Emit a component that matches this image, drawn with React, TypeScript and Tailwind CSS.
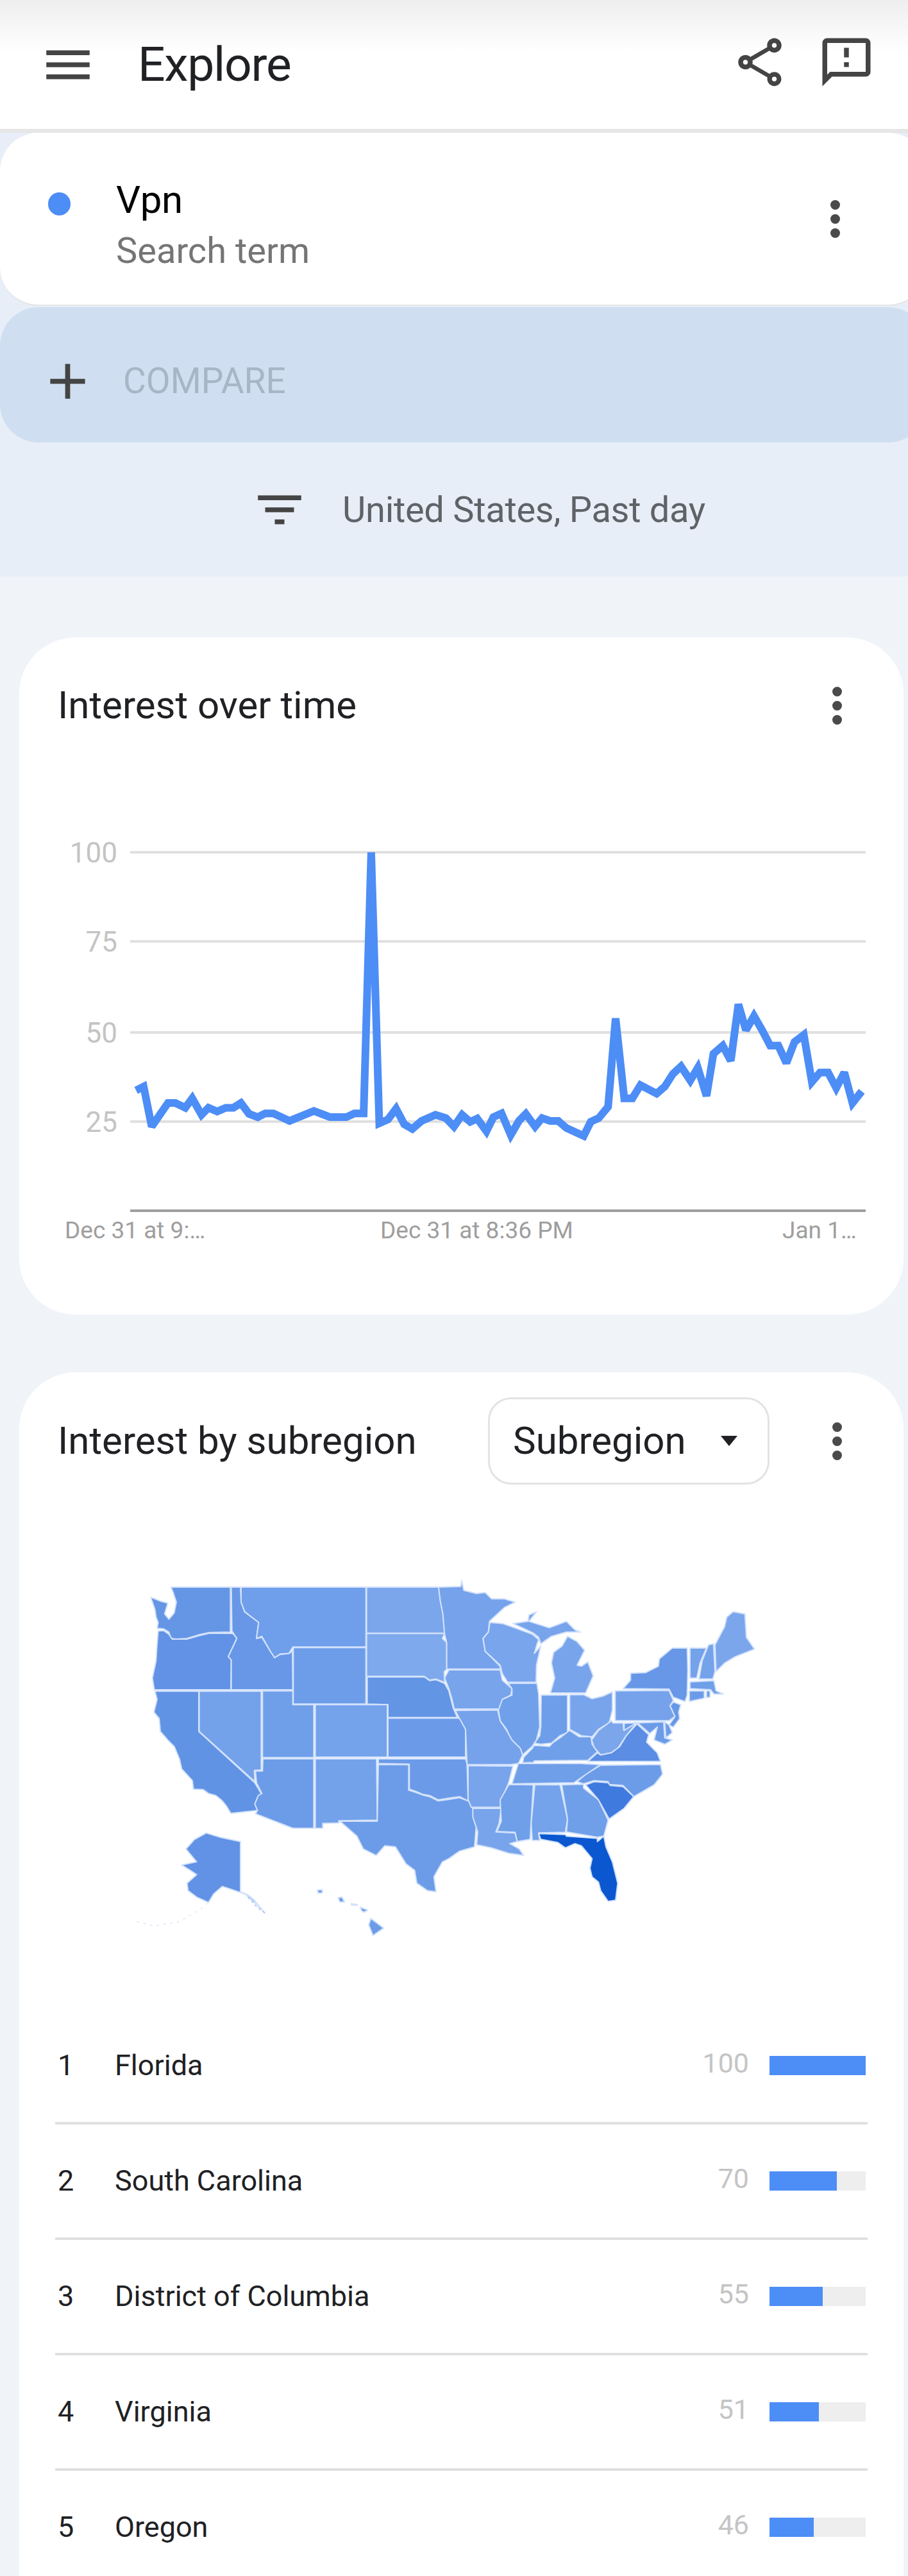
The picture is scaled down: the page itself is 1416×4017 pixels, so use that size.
const font = "Roboto";

const westStates: [string, string][] = [
  ["#6596e5", "200,75 478,75 478,285 380,287 330,298 275,315 225,318 200,315 190,285 165,270 135,268 140,240 130,215 125,180 105,122 150,140 185,150 170,200 190,225 215,195 225,145 210,100"],
  ["#6192e5", "140,280 165,278 190,295 205,318 275,318 330,302 380,290 490,292 508,315 468,400 482,415 480,555 122,555 113,500 130,420 135,340"],
  ["#6797e6", "482,75 525,75 528,145 545,190 610,240 600,315 625,310 665,375 685,405 710,390 755,385 768,370 770,555 482,555 482,415 468,400 508,315 485,280"],
  ["#6f9eea", "528,75 1112,75 1112,355 770,355 752,385 710,388 685,405 665,375 625,305 600,315 610,240 545,190 528,145"],
  ["#6d9de9", "772,358 1112,358 1112,622 772,622"],
  ["#7ba6ec", "1115,75 1452,75 1460,140 1472,200 1480,290 1115,290"],
  ["#7fa9ed", "1115,292 1480,292 1470,315 1490,335 1490,460 1478,470 1480,520 1440,505 1410,510 1385,492 1115,492"],
  ["#6395e5", "1118,495 1385,495 1410,512 1440,508 1480,525 1500,560 1520,640 1540,685 1215,685 1215,625 1118,622"],
  ["#6b9be8", "1215,688 1550,688 1570,710 1578,740 1578,870 1215,870"],
  ["#74a2eb", "875,625 1212,625 1212,870 875,870"],
  ["#6f9fe9", "628,560 770,560 770,625 868,625 868,872 628,872"],
  ["#73a1ea", "332,562 622,562 622,930 590,932 592,985 332,750"],
  ["#6193e5", "125,562 330,562 330,750 592,990 622,1040 600,1070 605,1120 480,1133 460,1100 440,1075 410,1050 375,1040 350,1022 305,1020 300,980 250,925 240,880 215,820 185,790 150,750 145,690 120,660 135,600"],
  ["#6c9ce8", "630,878 868,878 868,1203 770,1203 595,1135 605,1120 592,1090 608,1050 625,1040 600,990 595,935 628,935"],
  ["#73a1ea", "875,878 1162,878 1165,1165 985,1168 985,1178 910,1180 910,1203 875,1203"],
  ["#6b9be8", "1170,878 1578,878 1585,900 1590,1075 1550,1055 1500,1062 1450,1070 1410,1050 1380,1045 1345,1030 1315,1020 1315,903 1170,900"],
  ["#6c9ce8", "1170,905 1312,905 1312,1025 1345,1035 1380,1048 1410,1055 1450,1075 1500,1068 1550,1060 1603,1080 1630,1170 1620,1290 1550,1310 1500,1345 1470,1360 1430,1430 1440,1500 1400,1495 1350,1460 1340,1400 1300,1370 1250,1290 1200,1285 1160,1330 1100,1300 1070,1240 990,1170 1165,1170"],
  ["#6192e5", "365,1225 430,1245 525,1265 525,1500 560,1515 590,1540 640,1600 590,1550 545,1510 470,1485 440,1475 400,1510 375,1550 320,1525 280,1495 275,1460 320,1420 290,1400 250,1375 320,1360 270,1300 310,1255"],
  ["#6c9ce8", "1135,1625 1195,1670 1145,1705 1125,1655"],
  ["#6c9ce8", "885,1492 908,1490 908,1505 888,1507"],
  ["#6c9ce8", "982,1528 1000,1525 1012,1548 990,1548"],
  ["#6c9ce8", "1042,1556 1072,1560 1070,1564 1045,1562"],
  ["#6c9ce8", "1085,1572 1120,1585 1105,1596 1092,1590"],
];

const eastStates: [string, string][] = [
  ["#76a2eb", "-48,75 55,72 60,45 70,90 130,105 170,100 200,130 260,130 310,145 260,170 190,235 185,285 160,315 170,375 240,445 240,458 -10,458 -10,335 -20,295 -28,200 -40,140"],
  ["#79a5ec", "192,240 250,245 300,262 390,295 420,320 410,350 400,385 430,350 410,440 408,520 275,520 250,480 240,440 170,375 160,315 185,285"],
  ["#78a4ec", "300,245 370,235 375,205 410,190 375,235 470,265 550,235 590,275 615,285 550,285 480,305 430,340 420,310 395,290"],
  ["#78a4ec", "555,305 600,330 635,370 600,440 620,445 650,425 675,490 640,570 475,570 495,500 480,430 490,380 530,350"],
  ["#78a4ec", "0,462 240,462 250,510 295,550 290,580 250,600 240,645 25,645 15,600 0,550 -20,500"],
  ["#70a0ea", "278,525 412,525 420,575 425,730 410,790 390,820 345,860 330,825 290,785 270,740 240,700 232,650 250,600 295,580 295,550"],
  ["#6e9ee9", "432,580 555,580 555,755 520,770 480,805 430,810 400,805 425,770 430,730"],
  ["#78a4ec", "565,578 630,578 670,597 720,585 765,565 765,650 750,710 700,740 670,775 620,770 565,740"],
  ["#75a2eb", "30,652 228,650 240,700 270,745 295,790 335,830 345,860 325,900 290,905 85,905 78,740 50,690"],
  ["#6f9fe9", "400,815 470,820 490,800 520,780 565,745 610,775 665,775 670,810 695,845 650,885 400,888 395,895 345,897 350,870 390,830"],
  ["#7ba6ec", "768,710 815,710 818,745 860,710 880,708 830,770 790,830 760,850 710,860 680,825 668,790 700,745 760,700"],
  ["#75a2eb", "778,560 1030,558 1050,605 1035,630 1058,680 1030,700 778,700"],
  ["#6797e6", "815,550 850,510 850,478 920,475 980,445 985,410 1045,360 1115,360 1118,460 1115,580 1105,610 1050,590 1030,552"],
  ["#74a2eb", "1128,360 1205,360 1175,430 1160,500 1128,500"],
  ["#74a2eb", "1215,345 1238,340 1245,470 1235,505 1170,505 1185,420"],
  ["#7ba6ec", "1245,345 1290,260 1300,215 1330,190 1385,200 1392,310 1430,365 1340,400 1290,430 1250,470"],
  ["#6f9fe9", "1128,518 1240,512 1250,560 1285,575 1240,575 1225,555 1128,550"],
  ["#6c9ce8", "1125,560 1195,560 1195,595 1125,610"],
  ["#6c9ce8", "1205,560 1222,560 1222,590 1205,592"],
  ["#6797e6", "1050,612 1085,625 1075,660 1080,690 1050,730 1030,720 1058,680 1035,630"],
  ["#6c9ce8", "1010,705 1030,720 1045,755 1015,780"],
  ["#6c9ce8", "820,712 1005,705 1010,780 1045,790 1010,810 960,790 975,730 940,760 880,708 820,745"],
  ["#5a8de3", "650,890 695,850 710,860 760,850 800,820 830,770 880,715 935,765 925,800 975,850 990,890"],
  ["#6c9ce8", "600,985 640,950 710,908 990,905 1000,950 960,1000 865,1055 815,1003 750,998 745,985 680,980 630,995"],
  ["#6f9fe9", "405,900 615,900 710,905 650,945 585,990 295,995 325,900"],
  ["#78a4ec", "90,910 300,912 280,990 250,1060 240,1105 105,1105 90,1070"],
  ["#78a4ec", "112,1110 245,1110 235,1180 220,1220 310,1225 320,1265 285,1275 330,1300 350,1330 280,1320 200,1295 130,1280 135,1220 112,1150"],
  ["#6f9fe9", "295,998 395,1000 380,1255 320,1265 310,1222 225,1218 245,1170 240,1070 280,1000"],
  ["#74a2eb", "402,1000 520,1000 555,1160 545,1222 420,1225 425,1260 390,1260 385,1180"],
  ["#6f9fe9", "528,1000 630,997 630,1015 700,1070 745,1165 725,1240 695,1245 550,1220 555,1160"],
  ["#3f7ade", "640,1000 680,985 745,990 755,1003 815,1008 865,1055 820,1110 750,1160 700,1070"],
  ["#0b57d0", "420,1228 545,1232 550,1240 695,1250 695,1265 725,1240 735,1290 765,1360 790,1460 780,1540 745,1545 710,1495 700,1455 670,1430 660,1390 670,1345 620,1285 590,1275 545,1295 510,1270 430,1255"],
];

// read off the reference chart, in crop units
const trend = [
  [235, 1023], [248, 1015], [262, 1100], [290, 1050], [303, 1050], [320, 1060], [332, 1040], [348, 1075], [360, 1060], [375, 1068],
  [390, 1060], [403, 1060], [416, 1050], [430, 1073], [445, 1080], [458, 1072], [472, 1072], [500, 1088], [542, 1067], [570, 1080],
  [598, 1080], [612, 1072], [628, 1072], [641, 517], [655, 1093], [670, 1085], [684, 1062], [698, 1095], [712, 1105], [728, 1088],
  [752, 1075], [770, 1082], [784, 1100], [798, 1075], [812, 1090], [824, 1083], [840, 1110], [852, 1080], [866, 1072], [882, 1118],
  [896, 1088], [908, 1073], [924, 1100], [936, 1082], [950, 1088], [964, 1088], [978, 1103], [1008, 1120], [1020, 1090], [1034, 1082],
  [1050, 1058], [1063, 870], [1078, 1040], [1092, 1040], [1106, 1012], [1134, 1030], [1148, 1015], [1162, 988], [1176, 972], [1192, 1002],
  [1205, 975], [1220, 1035], [1232, 945], [1248, 928], [1262, 960], [1275, 840], [1288, 895], [1302, 865], [1316, 895], [1330, 928],
  [1344, 928], [1358, 965], [1372, 920], [1388, 905], [1402, 1005], [1416, 985], [1430, 985], [1444, 1018], [1458, 985], [1472, 1050], [1488, 1025],
];
const trendPoints = trend.map(([x, y]) => `${(x * 0.9031).toFixed(1)},${(950 + y * 0.7334).toFixed(1)}`).join(" ");

const regions = [
  { name: "Florida", value: 100 },
  { name: "South Carolina", value: 70 },
  { name: "District of Columbia", value: 55 },
  { name: "Virginia", value: 51 },
  { name: "Oregon", value: 46 },
];

function Dots() {
  return (
    <div className="flex shrink-0 flex-col gap-[7px]">
      <div className="h-[15px] w-[15px] rounded-full bg-[#4a4a4a]" />
      <div className="h-[15px] w-[15px] rounded-full bg-[#4a4a4a]" />
      <div className="h-[15px] w-[15px] rounded-full bg-[#4a4a4a]" />
    </div>
  );
}

function Icon({ d, size, className }: { d: string; size: string; className?: string }) {
  return (
    <svg viewBox="0 0 24 24" className={`${size} shrink-0 fill-[#444444] ${className ?? ""}`}>
      <path d={d} />
    </svg>
  );
}

function TrendChart() {
  const grid = [
    { y: 1329, label: "100" },
    { y: 1468, label: "75" },
    { y: 1610, label: "50" },
    { y: 1749, label: "25" },
  ];
  return (
    <svg viewBox="30 1206 1379 844" className="block h-[844px] w-[1379px]">
      <defs>
        <clipPath id="plot">
          <rect x="190" y="1327" width="1170" height="560" />
        </clipPath>
      </defs>
      {grid.map((g) => (
        <g key={g.label}>
          <line x1="203" x2="1350" y1={g.y} y2={g.y} stroke="#e0e0e0" strokeWidth="4" />
          <text x="183" y={g.y + 16} textAnchor="end" fontSize="44" fill="#c4c4c4" fontFamily={font}>
            {g.label}
          </text>
        </g>
      ))}
      <line x1="203" x2="1350" y1="1888" y2="1888" stroke="#9e9e9e" strokeWidth="4" />
      <polyline points={trendPoints} fill="none" stroke="#4d8df6" strokeWidth="12" strokeLinejoin="miter" strokeMiterlimit="2.5" clipPath="url(#plot)" />
      <text x="101" y="1931" fontSize="37" fill="#9e9e9e" fontFamily={font}>Dec 31 at 9:…</text>
      <text x="593" y="1931" fontSize="37" fill="#9e9e9e" fontFamily={font}>Dec 31 at 8:36 PM</text>
      <text x="1220" y="1931" fontSize="37" fill="#9e9e9e" fontFamily={font}>Jan 1…</text>
    </svg>
  );
}

function UsMap() {
  return (
    <svg viewBox="0 0 3000 1800" className="block h-[600px] w-[1000px]">
      <g stroke="#d3e2fb" strokeWidth="6" strokeLinejoin="round">
        {westStates.map(([fill, points], i) => (
          <polygon key={i} points={points} fill={fill} />
        ))}
        <g transform="translate(1500 0)">
          {eastStates.map(([fill, points], i) => (
            <polygon key={i} points={points} fill={fill} />
          ))}
        </g>
      </g>
      {/* aleutians and panhandle, barely visible in the reference */}
      <polyline points="40,1640 120,1660 240,1640 340,1580 385,1540" fill="none" stroke="#c5d8f8" strokeWidth="3" strokeDasharray="10 22" />
      <polyline points="560,1525 600,1570 640,1600" fill="none" stroke="#a9c6f4" strokeWidth="5" strokeDasharray="12 12" />
    </svg>
  );
}

export default function App() {
  return (
    <div className="h-[4017px] w-full overflow-hidden bg-[#f0f4f9] font-[Roboto,sans-serif]">
      {/* top bar */}
      <header className="flex h-[207px] items-center border-b-[6px] border-[#e6e6e6] bg-linear-to-b from-[#eeeeee] to-white to-[40%] pl-[61px] pr-[51px]">
        <Icon size="h-[90px] w-[90px]" d="M3 18h18v-2H3v2zm0-5h18v-2H3v2zm0-7v2h18V6H3z" />
        <div className="ml-[64px] text-[75px] leading-none tracking-[-1.3px] text-[#202124]">Explore</div>
        <div className="ml-auto flex items-center gap-[45px] pb-2">
          <Icon
            size="h-[90px] w-[90px]"
            d="M18 16.08c-.76 0-1.44.3-1.96.77L8.91 12.7c.05-.23.09-.46.09-.7s-.04-.47-.09-.7l7.05-4.11c.54.5 1.25.81 2.04.81 1.66 0 3-1.34 3-3s-1.34-3-3-3-3 1.34-3 3c0 .24.04.47.09.7L8.04 9.81C7.5 9.31 6.79 9 6 9c-1.66 0-3 1.34-3 3s1.34 3 3 3c.79 0 1.5-.31 2.04-.81l7.12 4.16c-.05.21-.08.43-.08.65 0 1.61 1.31 2.92 2.92 2.92s2.92-1.31 2.92-2.92-1.31-2.92-2.92-2.92zM18 4c.55 0 1 .45 1 1s-.45 1-1 1-1-.45-1-1 .45-1 1-1zM6 13c-.55 0-1-.45-1-1s.45-1 1-1 1 .45 1 1-.45 1-1 1zm12 7.02c-.55 0-1-.45-1-1s.45-1 1-1 1 .45 1 1-.45 1-1 1z"
          />
          <Icon
            size="h-[90px] w-[90px]"
            d="M20 2H4c-1.1 0-1.99.9-1.99 2L2 22l4-4h14c1.1 0 2-.9 2-2V4c0-1.1-.9-2-2-2zm0 14H5.17L4 17.17V4h16v12zM11 12h2v2h-2zm0-6h2v4h-2z"
          />
        </div>
      </header>

      {/* search terms */}
      <section className="bg-[#e8eef7]">
        <div className="flex h-[270px] w-[1445px] items-start rounded-[60px] border-b-2 border-[#e4e4e4] bg-white pl-[75px] pr-[135px] pt-[67px]">
          <div className="mt-[26px] h-[36px] w-[35px] shrink-0 rounded-full bg-[#4d8df6]" />
          <div className="ml-[71px]">
            <div className="text-[60px] leading-[76px] tracking-[-0.5px] text-black">Vpn</div>
            <div className="mt-[3px] text-[56px] leading-[76px] text-[#757575]">Search term</div>
          </div>
          <div className="ml-auto mt-[38px]">
            <Dots />
          </div>
        </div>
        <div className="mt-[2px] flex h-[211px] w-[1445px] items-center rounded-[60px] bg-[#cfdff1] pl-[59px] pt-[20px]">
          <Icon size="h-[93px] w-[93px]" d="M19 13h-6v6h-2v-6H5v-2h6V5h2v6h6v2z" />
          <div className="ml-[40px] text-[55px] leading-none text-[#a8b5c6]">COMPARE</div>
        </div>
        <div className="flex h-[209px] items-center pl-[391px]">
          <Icon size="h-[90px] w-[90px]" d="M10 18h4v-2h-4v2zM3 6v2h18V6H3zm3 7h12v-2H6v2z" />
          <div className="ml-[53px] text-[56px] leading-none tracking-[-0.3px] text-[#5f6368]">United States, Past day</div>
        </div>
      </section>

      {/* interest over time */}
      <section className="ml-[30px] mt-[95px] h-[1056px] w-[1379px] overflow-hidden rounded-[88px] bg-white">
        <div className="flex h-[212px] items-center justify-between pl-[60px] pr-[96px]">
          <h2 className="text-[60px] leading-none font-normal text-[#202124]">Interest over time</h2>
          <Dots />
        </div>
        <TrendChart />
      </section>

      {/* interest by subregion */}
      <section className="ml-[30px] mt-[90px] w-[1379px] rounded-t-[88px] bg-white">
        <div className="flex h-[212px] items-center pl-[60px] pr-[96px] pt-[2px]">
          <h2 className="text-[60px] leading-none font-normal text-[#202124]">Interest by subregion</h2>
          <div className="ml-auto mr-[98px] flex h-[136px] w-[439px] items-center rounded-[36px] border-[3px] border-[#e3e3e3] pl-[36px]">
            <span className="text-[60px] leading-none text-[#202124]">Subregion</span>
            <span className="ml-auto mr-[47px] h-0 w-0 border-x-[13px] border-t-[16px] border-x-transparent border-t-[#202124]" />
          </div>
          <Dots />
        </div>
        <div className="ml-[170px] mt-[98px]">
          <UsMap />
        </div>
        <div className="mx-[56px] mt-[83px]">
          {regions.map((r, i) => (
            <div key={r.name} className="flex h-[180px] items-center border-b-[4px] border-[#e0e0e0] pl-1 pr-[3px]">
              <div className="w-[91px] text-[45px] text-[#202124]">{i + 1}</div>
              <div className="-ml-[2px] text-[45px] text-[#202124]">{r.name}</div>
              <div className="ml-auto mr-[32px] pb-2 text-[43px] text-[#c4c4c4]">{r.value}</div>
              <div className="h-[30px] w-[150px] bg-[#eeeeee]">
                <div className="h-full bg-[#4d8df6]" style={{ width: `${r.value}%` }} />
              </div>
            </div>
          ))}
        </div>
      </section>
    </div>
  );
}
